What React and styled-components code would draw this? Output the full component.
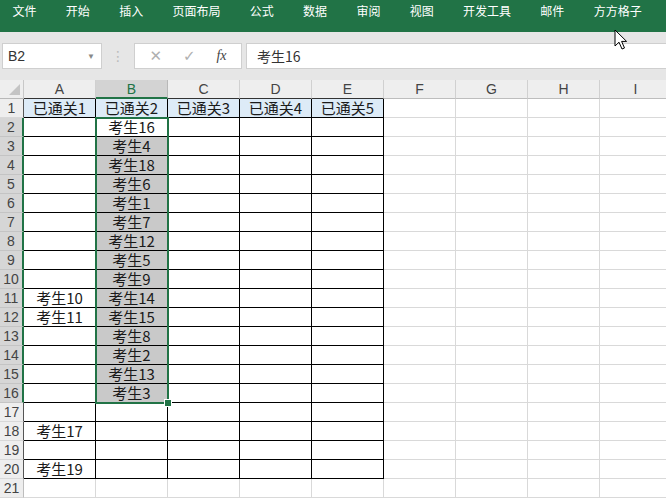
import React from "react";
import styled, { createGlobalStyle } from "styled-components";

const Global = createGlobalStyle`
  html, body { margin: 0; padding: 0; background: #fff; overflow: hidden; }
  body { font-family: "Noto Sans CJK SC", "Liberation Sans", sans-serif; }
`;

const GREEN = "#217346";
const CJK = `"Noto Sans CJK SC", "Liberation Sans", sans-serif`;

const Page = styled.div`
  position: relative;
  width: 666px;
  height: 500px;
  overflow: hidden;
`;

const Ribbon = styled.div`
  height: 32px;
  background: ${GREEN};
  display: flex;
  align-items: flex-start;
  gap: 29.3px;
  padding-left: 12.5px;
  box-sizing: border-box;
`;

const Tab = styled.div`
  color: #fff;
  font-family: ${CJK};
  font-size: 12px;
  line-height: 22px;
  white-space: nowrap;
`;

const FormulaBar = styled.div`
  height: 48px;
  background: #e6e6e6;
  display: flex;
  align-items: flex-start;
  padding: 11px 0 0 2px;
  box-sizing: border-box;
`;

const NameBox = styled.div`
  width: 100px;
  height: 26px;
  background: #fff;
  border: 1px solid #cfcfcf;
  box-sizing: border-box;
  display: flex;
  align-items: center;
  justify-content: space-between;
  padding: 0 6px 0 5px;
  font-family: "Liberation Sans", sans-serif;
  font-size: 14px;
  color: #333;
`;

const Caret = styled.span`
  font-size: 8px;
  color: #888;
`;

const Dots = styled.div`
  width: 32px;
  height: 26px;
  display: flex;
  align-items: center;
  justify-content: center;
  color: #bbb;
  font-size: 14px;
  font-family: "DejaVu Sans", sans-serif;
`;

const FxBox = styled.div`
  width: 108px;
  height: 26px;
  background: #fff;
  border: 1px solid #cfcfcf;
  box-sizing: border-box;
  display: flex;
  align-items: center;
  justify-content: space-around;
  padding: 0 4px;
`;

const FxIcon = styled.span`
  font-family: ${(p) => (p.$serif ? `"Liberation Serif", serif` : `"DejaVu Sans", sans-serif`)};
  font-style: ${(p) => (p.$serif ? "italic" : "normal")};
  font-size: ${(p) => (p.$serif ? "14px" : "15px")};
  color: ${(p) => p.$color};
`;

const Input = styled.div`
  flex: 1;
  height: 26px;
  margin-left: 4px;
  background: #fff;
  border: 1px solid #cfcfcf;
  border-right: none;
  box-sizing: border-box;
  display: flex;
  align-items: center;
  padding-left: 10px;
  font-family: ${CJK};
  font-size: 14px;
  color: #333;
`;

const SheetWrap = styled.div`
  position: relative;
  height: 420px;
  overflow: hidden;
`;

const Grid = styled.div`
  display: grid;
  grid-template-columns: 24px repeat(9, 72px);
  grid-auto-rows: 19px;
  width: 672px;
`;

const Corner = styled.div`
  position: relative;
  background: #eeeeee;
  border-right: 1px solid #c8c8c8;
  border-bottom: 1px solid #b8b8b8;
  box-sizing: border-box;
  &::after {
    content: "";
    position: absolute;
    right: 3px;
    bottom: 3px;
    width: 0;
    height: 0;
    border-left: 11px solid transparent;
    border-bottom: 11px solid #c4c4c4;
  }
`;

const ColHead = styled.div`
  background: ${(p) => (p.$sel ? "#d3d3d3" : "#eeeeee")};
  color: ${(p) => (p.$sel ? GREEN : "#444")};
  border-right: 1px solid ${(p) => (p.$sel ? "#b8b8b8" : "#d0d0d0")};
  border-bottom: ${(p) => (p.$sel ? `2px solid ${GREEN}` : p.$data ? "1px solid #333" : "1px solid #bdbdbd")};
  box-sizing: border-box;
  font-family: "Liberation Sans", sans-serif;
  font-size: 14px;
  line-height: 19px;
  text-align: center;
`;

const RowHead = styled.div`
  background: ${(p) => (p.$sel ? "#d6d6d6" : "#eeeeee")};
  color: #444;
  border-right: ${(p) => (p.$sel ? `2px solid ${GREEN}` : p.$data ? "1px solid #555" : "1px solid #bdbdbd")};
  border-bottom: 1px solid ${(p) => (p.$sel ? "#c4c4c4" : "#d8d8d8")};
  box-sizing: border-box;
  font-family: "Liberation Sans", sans-serif;
  font-size: 14px;
  line-height: 19px;
  text-align: center;
`;

const Cell = styled.div`
  background: ${(p) => p.$bg};
  border-right: 1px solid ${(p) => (p.$data ? "#000" : "#d9d9d9")};
  border-bottom: 1px solid ${(p) => (p.$data ? "#000" : "#d9d9d9")};
  box-sizing: border-box;
  font-family: ${CJK};
  font-size: 15px;
  line-height: 18px;
  text-align: center;
  color: #1a1a1a;
  white-space: nowrap;
`;

const Selection = styled.div`
  position: absolute;
  left: 95px;
  top: 37px;
  width: 74px;
  height: 287px;
  border: 2px solid ${GREEN};
  box-sizing: border-box;
  pointer-events: none;
`;

const Handle = styled.div`
  position: absolute;
  right: -5px;
  bottom: -5px;
  width: 6px;
  height: 6px;
  background: ${GREEN};
  border: 1px solid #fff;
`;

const Cursor = styled.svg`
  position: absolute;
  left: 614px;
  top: 29px;
`;

const tabs = ["文件", "开始", "插入", "页面布局", "公式", "数据", "审阅", "视图", "开发工具", "邮件", "方方格子"];
const cols = ["A", "B", "C", "D", "E", "F", "G", "H", "I"];

const bCol = ["考生16", "考生4", "考生18", "考生6", "考生1", "考生7", "考生12", "考生5", "考生9", "考生14", "考生15", "考生8", "考生2", "考生13", "考生3"];
const aCol = { 11: "考生10", 12: "考生11", 18: "考生17", 20: "考生19" };

function cellText(r, c) {
  if (r === 1 && c < 5) return `已通关${c + 1}`;
  if (c === 1 && r >= 2 && r <= 16) return bCol[r - 2];
  if (c === 0 && aCol[r]) return aCol[r];
  return "";
}

function cellBg(r, c) {
  if (r === 1 && c < 5) return "#ddebf7";
  if (c === 1 && r >= 3 && r <= 16) return "#c9c9c9";
  return "#fff";
}

export default function App() {
  const rows = Array.from({ length: 21 }, (_, i) => i + 1);
  return (
    <Page>
      <Global />
      <Ribbon>
        {tabs.map((t) => (
          <Tab key={t}>{t}</Tab>
        ))}
      </Ribbon>
      <FormulaBar>
        <NameBox>
          <span>B2</span>
          <Caret>▼</Caret>
        </NameBox>
        <Dots>⋮</Dots>
        <FxBox>
          <FxIcon $color="#b0b0b0">✕</FxIcon>
          <FxIcon $color="#b0b0b0">✓</FxIcon>
          <FxIcon $serif $color="#444">fx</FxIcon>
        </FxBox>
        <Input>考生16</Input>
      </FormulaBar>
      <SheetWrap>
        <Grid>
          <Corner />
          {cols.map((c, i) => (
            <ColHead key={c} $sel={i === 1} $data={i < 5}>
              {c}
            </ColHead>
          ))}
          {rows.map((r) => (
            <React.Fragment key={r}>
              <RowHead $sel={r >= 2 && r <= 16} $data={r <= 20}>
                {r}
              </RowHead>
              {cols.map((c, ci) => (
                <Cell key={c} $data={r <= 20 && ci < 5} $bg={cellBg(r, ci)}>
                  {cellText(r, ci)}
                </Cell>
              ))}
            </React.Fragment>
          ))}
        </Grid>
        <Selection>
          <Handle />
        </Selection>
      </SheetWrap>
      <Cursor width="14" height="22" viewBox="0 0 14 22">
        <path d="M1 1 L1 17 L5 13.2 L8 20 L10.5 19 L7.6 12.4 L12.6 12.4 Z" fill="#fff" stroke="#000" strokeWidth="1" strokeLinejoin="round" />
      </Cursor>
    </Page>
  );
}
